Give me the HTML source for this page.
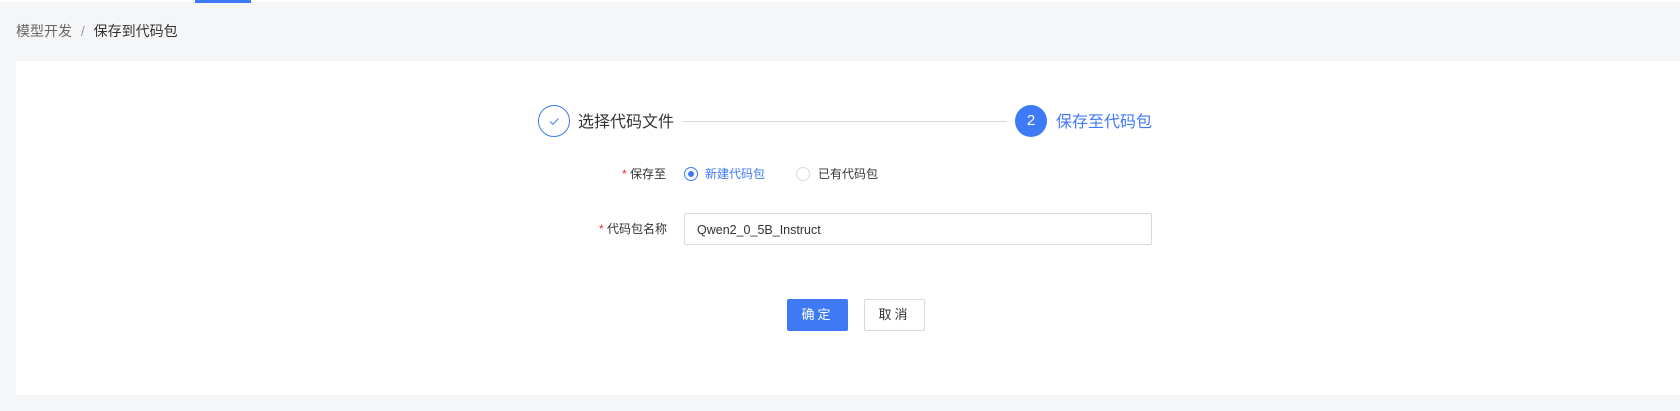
<!DOCTYPE html>
<html><head><meta charset="utf-8"><style>
body{margin:0;width:1680px;height:411px;background:#f5f6f8;font-family:"Liberation Sans","Noto Sans CJK SC",sans-serif;position:relative;overflow:hidden}
.a{position:absolute}
.topline{left:0;top:0;width:1680px;height:2px;background:#fff}
.card{left:16px;top:61px;width:1664px;height:334px;background:#fff}
.t{white-space:nowrap;line-height:1}
.radio{width:14px;height:14px;border-radius:50%;box-sizing:border-box}
</style></head><body>
<div class="a topline"></div>
<div class="a" style="left:195px;top:0;width:56px;height:3px;background:#3f7af6"></div>
<div class="a t" style="left:16px;top:24px;font-size:14px;color:#666">模型开发 <span style="color:#999;margin:0 5px">/</span> <span style="color:#333">保存到代码包</span></div>
<div class="a card"></div>
<div class="a" style="left:538px;top:105px;width:30px;height:30px;border:1px solid #3f7af6;border-radius:50%;box-sizing:content-box"></div>
<svg class="a" style="left:547px;top:114px" width="14" height="14" viewBox="0 0 14 14"><path d="M3 7.5l3 2.8L11.5 4.5" fill="none" stroke="#3f7af6" stroke-width="1"/></svg>
<div class="a t" style="left:578px;top:115px;font-size:16px;color:#333">选择代码文件</div>
<div class="a" style="left:682px;top:121px;width:325px;height:1px;background:#d9d9d9"></div>
<div class="a" style="left:1015px;top:105px;width:32px;height:32px;border-radius:50%;background:#3f7af6;color:#fff;font-size:15px;text-align:center;line-height:32px">2</div>
<div class="a t" style="left:1056px;top:115px;font-size:16px;color:#3f7af6">保存至代码包</div>
<div class="a t" style="left:622px;top:168px;font-size:12px;color:#333"><span style="color:#f5222d">*</span> 保存至</div>
<div class="a radio" style="left:684px;top:167px;border:1px solid #3f7af6"></div>
<div class="a" style="left:688px;top:171px;width:6px;height:6px;border-radius:50%;background:#3f7af6"></div>
<div class="a t" style="left:705px;top:168px;font-size:12px;color:#3f7af6">新建代码包</div>
<div class="a radio" style="left:796px;top:167px;border:1px solid #d9d9d9"></div>
<div class="a t" style="left:818px;top:168px;font-size:12px;color:#333">已有代码包</div>
<div class="a t" style="left:599px;top:223px;font-size:12px;color:#333"><span style="color:#f5222d">*</span> 代码包名称</div>
<div class="a" style="left:684px;top:213px;width:468px;height:32px;border:1px solid #d9d9d9;border-radius:2px;box-sizing:border-box"></div>
<div class="a t" style="left:697px;top:224px;font-size:12.5px;color:#333">Qwen2_0_5B_Instruct</div>
<div class="a" style="left:787px;top:299px;width:61px;height:32px;background:#3f7af6;border-radius:2px;color:#fff;font-size:13px;text-align:center;line-height:32px;letter-spacing:3px">确定</div>
<div class="a" style="left:864px;top:299px;width:61px;height:32px;border:1px solid #d9d9d9;box-sizing:border-box;border-radius:2px;color:#333;font-size:13px;text-align:center;line-height:30px;letter-spacing:3px">取消</div>
</body></html>
